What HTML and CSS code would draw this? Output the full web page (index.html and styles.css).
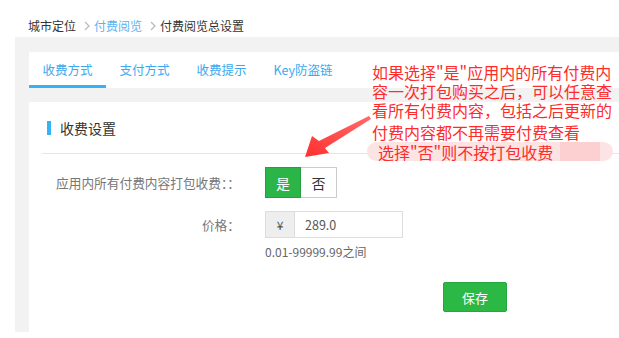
FILE: index.html
```html
<!DOCTYPE html>
<html lang="zh-CN">
<head>
  <meta charset="UTF-8">
  <meta name="viewport" content="width=device-width, initial-scale=1.0">
  <title>付费阅览总设置</title>
  <link rel="stylesheet" href="styles.css">
</head>
<body>
  <div class="crumbs">
    <span>城市定位</span>
    <svg class="sep" width="6" height="10" viewBox="0 0 6 10"><path d="M1 1l4 4-4 4" fill="none" stroke="#bbb" stroke-width="1.3"/></svg>
    <a href="#">付费阅览</a>
    <svg class="sep" width="6" height="10" viewBox="0 0 6 10"><path d="M1 1l4 4-4 4" fill="none" stroke="#bbb" stroke-width="1.3"/></svg>
    <span>付费阅览总设置</span>
  </div>

  <div class="main">
    <div class="tabs">
      <a class="tab active" href="#">收费方式</a>
      <a class="tab" href="#">支付方式</a>
      <a class="tab" href="#">收费提示</a>
      <a class="tab" href="#">Key防盗链</a>
    </div>

    <div class="panel">
      <div class="panel-head">
        <span class="panel-title">收费设置</span>
      </div>
      <div class="form">
        <div class="row">
          <label class="label">应用内所有付费内容打包收费：：</label>
          <div class="switch">
            <button class="on">是</button>
            <button>否</button>
          </div>
        </div>
        <div class="row">
          <label class="label">价格：</label>
          <div class="field">
            <div class="group">
              <span class="addon">¥</span>
              <input type="text" value="289.0">
            </div>
            <div class="hint">0.01-99999.99之间</div>
          </div>
        </div>
        <div class="actions">
          <button class="save">保存</button>
        </div>
      </div>
    </div>
  </div>

  <div class="note">
    <div>如果选择"是"应用内的所有付费内</div>
    <div>容一次打包购买之后，可以任意查</div>
    <div>看所有付费内容，包括之后更新的</div>
    <div class="note-gap">付费内容都不再需要付费查看</div>
    <div class="note-pill">选择"否"则不按打包收费</div>
  </div>

  <svg class="arrow" width="75" height="52" viewBox="0 0 75 52">
    <defs>
      <linearGradient id="arrowFill" x1="1" y1="0" x2="0" y2="1">
        <stop offset="0" stop-color="#ff6b6b"/>
        <stop offset="1" stop-color="#ff2f2f"/>
      </linearGradient>
    </defs>
    <polygon points="5,47 12,26 19,31 69,6 71,9 25,38 29,43" fill="url(#arrowFill)"/>
  </svg>
</body>
</html>
```

FILE: styles.css
```css
body {
  margin: 0;
  padding: 0;
  width: 619px;
  height: 338px;
  overflow: hidden;
  background-color: white;
  font-family: "Noto Sans CJK SC", "Microsoft YaHei", sans-serif;
  color: #333;
  position: relative;
}
.crumbs {
  height: 37px;
  box-sizing: border-box;
  padding: 14px 0 0 28px;
  font-size: 12px;
  line-height: 14px;
  display: flex;
  align-items: center;
  align-self: flex-start;
}
.crumbs a {
  color: #5ab4ee;
  text-decoration: none;
}
.sep {
  margin: 0 4px 0 8px;
}
.main {
  margin-left: 15px;
  padding: 15px 0 0 14px;
  height: 295px;
  box-sizing: border-box;
  background-color: #f2f2f2;
}
.tabs {
  display: flex;
  height: 36px;
  background-color: white;
}
.tab {
  padding: 0 13.5px;
  font-size: 12.5px;
  line-height: 36px;
  color: #3aa9f0;
  text-decoration: none;
}
.tab.active {
  box-shadow: inset 0 -3px 0 #33b5f5;
}
.panel {
  margin-top: 14px;
  height: 230px;
  background-color: white;
}
.panel-head {
  height: 51px;
  margin-left: 13px;
  padding-left: 5px;
  display: flex;
  align-items: center;
  border-bottom: 1px solid #e6e6e6;
}
.panel-title {
  display: flex;
  align-items: center;
  font-size: 14px;
  color: #333;
}
.panel-title::before {
  content: "";
  width: 4px;
  height: 14px;
  margin-right: 9px;
  background-color: #33b5f5;
}
.form {
  padding-top: 13px;
}
.row {
  display: flex;
  align-items: flex-start;
  margin-bottom: 13px;
}
.label {
  width: 211px;
  margin-right: 25px;
  text-align: right;
  font-size: 12.7px;
  line-height: 31px;
  color: #777;
}
.row + .row .label {
  line-height: 27px;
}
.switch {
  display: flex;
}
.switch button {
  width: 36px;
  height: 31px;
  padding: 0;
  font-family: inherit;
  font-size: 14px;
  background-color: white;
  border: 1px solid #ccc;
  border-left: none;
  color: #333;
}
.switch button.on {
  background-color: #2bb548;
  border: 1px solid #24a03f;
  color: white;
}
.group {
  display: flex;
  height: 27px;
}
.addon {
  width: 30px;
  box-sizing: border-box;
  border: 1px solid #ddd;
  background-color: #eee;
  text-align: center;
  font-size: 12px;
  line-height: 25px;
  color: #555;
}
.group input {
  width: 108px;
  box-sizing: border-box;
  border: 1px solid #ddd;
  border-left: none;
  padding: 0 10px;
  font-family: inherit;
  font-size: 12.5px;
  color: #555;
  outline: none;
}
.hint {
  margin-top: 7px;
  font-size: 12px;
  line-height: 14px;
  color: #666;
}
.actions {
  padding: 10px 0 0 414px;
}
.save {
  width: 64px;
  height: 30px;
  padding: 0;
  border: 1px solid #26a63f;
  border-radius: 2px;
  background-color: #2cb845;
  color: white;
  font-family: inherit;
  font-size: 13px;
}
.note {
  position: absolute;
  left: 372px;
  top: 63px;
  font-size: 16px;
  line-height: 19px;
  color: #ff2b2b;
  white-space: nowrap;
}
.note-gap {
  margin-top: 3px;
}
.note-pill {
  margin: 0 0 0 -5px;
  width: 246px;
  height: 19px;
  box-sizing: border-box;
  padding-left: 11px;
  line-height: 21px;
  border-radius: 10px;
  background: linear-gradient(to right, #fde4e4 0, #fde4e4 193px, #fcd0d0 193px, #fcd0d0 233px, #fde4e4 233px);
}
.arrow {
  position: absolute;
  left: 300px;
  top: 110px;
}
```
